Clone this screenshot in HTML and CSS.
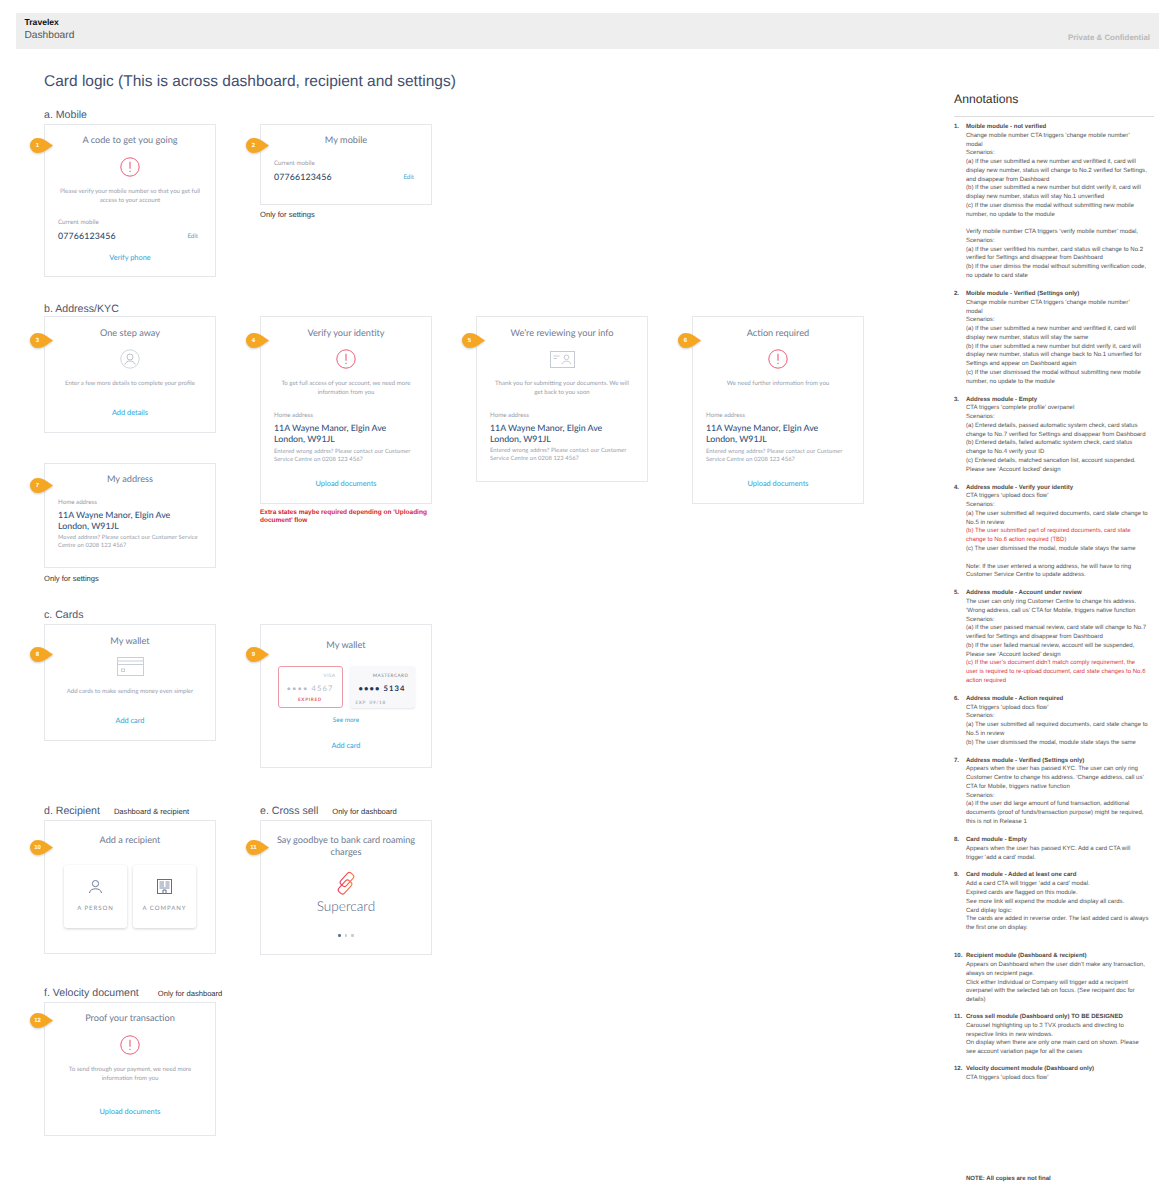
FILE: index.html
```html
<!DOCTYPE html>
<html lang="en">
<head>
<meta charset="utf-8">
<title>Travelex Dashboard - Card logic</title>
<link rel="stylesheet" href="styles.css">
</head>
<body>
<svg class="defs" width="0" height="0" aria-hidden="true">
  <symbol id="pin" viewBox="0 0 23 15"><path d="M7.5 0C13 0 17 3.5 23 7.5C17 11.5 13 15 7.5 15A7.5 7.5 0 0 1 7.5 0Z"/></symbol>
  <symbol id="alert" viewBox="0 0 20 20"><circle cx="10" cy="10" r="9.2" fill="none" stroke="#ee5a75" stroke-width="1"/><path d="M10 4.8V11.8" stroke="#ee5a75" stroke-width="1.1" fill="none"/><circle cx="10" cy="14.4" r=".7" fill="#ee5a75"/></symbol>
  <linearGradient id="sc" x1="0" y1="1" x2="1" y2="0"><stop offset="0" stop-color="#f0355f"/><stop offset="1" stop-color="#f77b3c"/></linearGradient>
</svg>
<header class="top">
  <div>
    <div class="brand">Travelex</div>
    <div class="crumb">Dashboard</div>
  </div>
  <div class="conf">Private &amp; Confidential</div>
</header>
<div class="page">
  <main class="main">
    <h1 class="title">Card logic (This is across dashboard, recipient and settings)</h1>

    <h2 class="sec sec-a">a. Mobile</h2>
    <div class="row">
      <div class="col">
        <article class="card card-1">
          <div class="badge b14"><svg><use href="#pin"/></svg><span>1</span></div>
          <h3 class="ct">A code to get you going</h3>
          <svg class="ic-alert"><use href="#alert"/></svg>
          <p class="desc">Please verify your mobile number so that you get full<br>access to your account</p>
          <div class="lab lab-1">Current mobile</div>
          <div class="phone"><span class="num">07766123456</span><a class="edit">Edit</a></div>
          <a class="link link-1">Verify phone</a>
        </article>
      </div>
      <div class="col">
        <article class="card card-2">
          <div class="badge b14"><svg><use href="#pin"/></svg><span>2</span></div>
          <h3 class="ct">My mobile</h3>
          <div class="lab lab-2">Current mobile</div>
          <div class="phone"><span class="num">07766123456</span><a class="edit">Edit</a></div>
        </article>
        <p class="only">Only for settings</p>
      </div>
    </div>

    <h2 class="sec sec-b">b. Address/KYC</h2>
    <div class="row">
      <div class="col">
        <article class="card card-3">
          <div class="badge b17"><svg><use href="#pin"/></svg><span>3</span></div>
          <h3 class="ct ct-b">One step away</h3>
          <svg class="ic-alert" viewBox="0 0 20 20"><circle cx="10" cy="10" r="9.2" fill="none" stroke="#cfd3dc"/><circle cx="10" cy="8" r="3" fill="none" stroke="#bcc2ce"/><path d="M4.8 15.6C5.8 12.8 7.8 12 10 12S14.2 12.8 15.2 15.6" fill="none" stroke="#bcc2ce"/></svg>
          <p class="desc">Enter a few more details to complete your profile</p>
          <a class="link link-3">Add details</a>
        </article>
        <article class="card card-7">
          <div class="badge b15"><svg><use href="#pin"/></svg><span>7</span></div>
          <h3 class="ct">My address</h3>
          <div class="lab lab-7">Home address</div>
          <div class="addr">11A Wayne Manor, Elgin Ave<br>London, W91JL</div>
          <p class="small">Moved address? Please contact our Customer Service<br>Centre on 0208 123 4567</p>
        </article>
        <p class="only only-7">Only for settings</p>
      </div>
      <div class="col">
        <article class="card card-4">
          <div class="badge b17"><svg><use href="#pin"/></svg><span>4</span></div>
          <h3 class="ct ct-b">Verify your identity</h3>
          <svg class="ic-alert"><use href="#alert"/></svg>
          <p class="desc">To get full access of your account, we need more<br>information from you</p>
          <div class="lab lab-4">Home address</div>
          <div class="addr">11A Wayne Manor, Elgin Ave<br>London, W91JL</div>
          <p class="small">Entered wrong addrss? Please contact our Customer<br>Service Centre on 0208 123 4567</p>
          <a class="link link-4">Upload documents</a>
        </article>
        <p class="warn">Extra states maybe required depending on ‘Uploading<br>document’ flow</p>
      </div>
      <div class="col">
        <article class="card card-5">
          <div class="badge b17"><svg><use href="#pin"/></svg><span>5</span></div>
          <h3 class="ct ct-b">We’re reviewing your info</h3>
          <svg class="ic-id" viewBox="0 0 25 17"><rect x=".5" y=".5" width="24" height="16" fill="none" stroke="#c5cad5"/><path d="M3.5 5H9.5M3.5 7.5H7" stroke="#c5cad5" fill="none"/><circle cx="16.5" cy="6.3" r="2.3" fill="none" stroke="#c5cad5"/><path d="M12 13.2C12.8 10.8 14.8 10.2 16.5 10.2S20.2 10.8 21 13.2" fill="none" stroke="#c5cad5"/></svg>
          <p class="desc desc-id">Thank you for submitting your documents. We will<br>get back to you soon</p>
          <div class="lab lab-4">Home address</div>
          <div class="addr">11A Wayne Manor, Elgin Ave<br>London, W91JL</div>
          <p class="small">Entered wrong addrss? Please contact our Customer<br>Service Centre on 0208 123 4567</p>
        </article>
      </div>
      <div class="col">
        <article class="card card-4">
          <div class="badge b17"><svg><use href="#pin"/></svg><span>6</span></div>
          <h3 class="ct ct-b">Action required</h3>
          <svg class="ic-alert"><use href="#alert"/></svg>
          <p class="desc desc-one">We need further information from you</p>
          <div class="lab lab-4">Home address</div>
          <div class="addr">11A Wayne Manor, Elgin Ave<br>London, W91JL</div>
          <p class="small">Entered wrong addrss? Please contact our Customer<br>Service Centre on 0208 123 4567</p>
          <a class="link link-4">Upload documents</a>
        </article>
      </div>
    </div>

    <h2 class="sec sec-c">c. Cards</h2>
    <div class="row">
      <div class="col">
        <article class="card card-8">
          <div class="badge b23"><svg><use href="#pin"/></svg><span>8</span></div>
          <h3 class="ct ct-b">My wallet</h3>
          <svg class="ic-card" viewBox="0 0 27 19"><rect x=".5" y=".5" width="26" height="18" fill="none" stroke="#c9ced8"/><path d="M.5 4H26.5M.5 7.5H26.5" stroke="#c9ced8" fill="none"/><rect x="4.5" y="12" width="3" height="2.5" fill="none" stroke="#c9ced8"/></svg>
          <p class="desc desc-8">Add cards to make sending money even simpler</p>
          <a class="link link-8">Add card</a>
        </article>
      </div>
      <div class="col">
        <article class="card card-9">
          <div class="badge b23"><svg><use href="#pin"/></svg><span>9</span></div>
          <h3 class="ct ct-9">My wallet</h3>
          <div class="minis">
            <div class="mini mini-exp">
              <div class="scheme">VISA</div>
              <div class="pan">•••• 4567</div>
              <div class="expired">EXPIRED</div>
            </div>
            <div class="mini mini-ok">
              <div class="scheme">MASTERCARD</div>
              <div class="pan">•••• 5134</div>
              <div class="exp">EXP &nbsp;09/18</div>
            </div>
          </div>
          <a class="link see">See more</a>
          <a class="link add">Add card</a>
        </article>
      </div>
    </div>

    <div class="row row-d">
      <div class="col">
        <h2 class="sec sec-n">d. Recipient <span class="aside-n">Dashboard &amp; recipient</span></h2>
        <article class="card card-10">
          <div class="badge b20"><svg><use href="#pin"/></svg><span>10</span></div>
          <h3 class="ct ct-low">Add a recipient</h3>
          <div class="tiles">
            <div class="tile">
              <svg class="ic-p" viewBox="0 0 13 13"><circle cx="6.5" cy="3.6" r="3.1" fill="none" stroke="#5f6f8d" stroke-width=".9"/><path d="M.4 13C1 10 3.4 8.8 6.5 8.8S12 10 12.6 13" fill="none" stroke="#5f6f8d" stroke-width=".9"/></svg>
              <span>A PERSON</span>
            </div>
            <div class="tile">
              <svg class="ic-c" viewBox="0 0 15 15"><rect x=".5" y=".5" width="14" height="14" fill="none" stroke="#5f6f8d"/><path d="M2.5 3H7M8.5 3H12.5M2.5 5H7M8.5 5H12.5M2.5 7H7M8.5 7H12.5M2.5 9H12.5" stroke="#5f6f8d" stroke-width=".8" fill="none"/><path d="M6 14.5V11H9V14.5" fill="none" stroke="#5f6f8d"/></svg>
              <span>A COMPANY</span>
            </div>
          </div>
        </article>
      </div>
      <div class="col">
        <h2 class="sec sec-n">e. Cross sell <span class="aside-n">Only for dashboard</span></h2>
        <article class="card card-11">
          <div class="badge b20"><svg><use href="#pin"/></svg><span>11</span></div>
          <h3 class="ct ct-low">Say goodbye to bank card roaming<br>charges</h3>
          <svg class="ic-sc" viewBox="0 0 18 25"><g fill="none" stroke="url(#sc)" stroke-width="1.1"><rect x="6.2" y="1" width="7.5" height="15" rx="2.6" transform="rotate(42 10 8.5)"/><rect x="4.3" y="8.5" width="7.5" height="15" rx="2.6" transform="rotate(42 8 16)"/></g></svg>
          <div class="super">Supercard</div>
          <div class="dots"><i class="on"></i><i></i><i></i></div>
        </article>
      </div>
    </div>

    <h2 class="sec sec-f">f. Velocity document <span class="aside-n aside-f">Only for dashboard</span></h2>
    <div class="row">
      <div class="col">
        <article class="card card-12">
          <div class="badge b11"><svg><use href="#pin"/></svg><span>12</span></div>
          <h3 class="ct">Proof your transaction</h3>
          <svg class="ic-alert"><use href="#alert"/></svg>
          <p class="desc">To send through your payment, we need more<br>information from you</p>
          <a class="link link-12">Upload documents</a>
        </article>
      </div>
    </div>
  </main>

  <aside class="notes">
    <h2 class="notes-title">Annotations</h2>
    <ol class="list">
      <li><span class="n">1.</span><div><b>Moible module - not verified</b><br>Change mobile number CTA triggers ‘change mobile number’<br>modal<br>Scenarios:<br>(a) If the user submitted a new number and verifitied it, card will<br>display new number, status will change to No.2 verified for Settings,<br>and disappear from Dashboard<br>(b) If the user submitted a new number but didnt verify it, card will<br>display new number, status will stay No.1 unverified<br>(c) If the user dismiss the modal without submitting new mobile<br>number, no update to the module<br><br>Verify mobile number CTA triggers ‘verify mobile number’ modal,<br>Scenarios:<br>(a) If the user verifitied his number, card status will change to No.2<br>verified for Settings and disappear from Dashboard<br>(b) If the user dimiss the modal without submitting verification code,<br>no update to card state</div></li>
      <li><span class="n">2.</span><div><b>Moible module - Verified (Settings only)</b><br>Change mobile number CTA triggers ‘change mobile number’<br>modal<br>Scenarios:<br>(a) If the user submitted a new number and verifitied it, card will<br>display new number, status will stay the same<br>(b) If the user submitted a new number but didnt verify it, card will<br>display new number, status will change back to No.1 unverfied for<br>Settings and appear on Dashboard again<br>(c) If the user dismissed the modal without submitting new mobile<br>number, no update to the module</div></li>
      <li><span class="n">3.</span><div><b>Address module - Empty</b><br>CTA triggers ‘complete profile’ overpanel<br>Scenarios:<br>(a) Entered details, passed automatic system check, card status<br>change to No.7 verified for Settings and disappear from Dashboard<br>(b) Entered details, failed automatic system check, card status<br>change to No.4 verify your ID<br>(c) Entered details, matched sancation list, account suspended.<br>Please see ‘Account locked’ design</div></li>
      <li><span class="n">4.</span><div><b>Address module - Verify your identity</b><br>CTA triggers ‘upload docs flow’<br>Scenarios:<br>(a) The user submitted all required documents, card state change to<br>No.5 in review<br><span class="red">(b) The user submitted part of required documents, card state<br>change to No.6 action required (TBD)</span><br>(c) The user dismissed the modal, module state stays the same<br><br>Note: If the user entered a wrong address, he will have to ring<br>Customer Service Centre to update address.</div></li>
      <li><span class="n">5.</span><div><b>Address module - Account under review</b><br>The user can only ring Customer Centre to change his address.<br>‘Wrong address, call us’ CTA for Mobile, triggers native function<br>Scenarios:<br>(a) If the user passed manual review, card state will change to No.7<br>verified for Settings and disappear from Dashboard<br>(b) If the user failed manual review, account will be suspended,<br>Please see ‘Account locked’ design<br><span class="red">(c) If the user’s document didn’t match comply requirement, the<br>user is required to re-upload document, card state changes to No.6<br>action required</span></div></li>
      <li><span class="n">6.</span><div><b>Address module - Action required</b><br>CTA triggers ‘upload docs flow’<br>Scenarios:<br>(a) The user submitted all required documents, card state change to<br>No.5 in review<br>(b) The user dismissed the modal, module state stays the same</div></li>
      <li><span class="n">7.</span><div><b>Address module - Verified (Settings only)</b><br>Appears when the user has passed KYC. The user can only ring<br>Customer Centre to change his address. ‘Change address, call us’<br>CTA for Mobile, triggers native function<br>Scenarios:<br>(a) If the user did large amount of fund transaction, additional<br>documents (proof of funds/transaction purpose) might be required,<br>this is not in Release 1</div></li>
      <li><span class="n">8.</span><div><b>Card module - Empty</b><br>Appears when the user has passed KYC. Add a card CTA will<br>trigger ‘add a card’ modal.</div></li>
      <li class="gap-extra"><span class="n">9.</span><div><b>Card module - Added at least one card</b><br>Add a card CTA will trigger ‘add a card’ modal.<br>Expired cards are flagged on this module.<br>See more link will expend the module and display all cards.<br>Card diplay logic:<br>The cards are added in reverse order. The last added card is always<br>the first one on display.</div></li>
      <li class="gap-tight"><span class="n">10.</span><div><b>Recipient module (Dashboard &amp; recipient)</b><br>Appears on Dashboard when the user didn’t make any transaction,<br>always on recipient page.<br>Click either Individual or Company will trigger add a recipeint<br>overpanel with the selected tab on focus. (See recipaint doc for<br>details)</div></li>
      <li class="gap-tight"><span class="n">11.</span><div><b>Cross sell module (Dashboard only) TO BE DESIGNED</b><br>Carousel highlighting up to 3 TVX products and directing to<br>respective links in new windows.<br>On display when there are only one main card on shown. Please<br>see account variation page for all the cases</div></li>
      <li><span class="n">12.</span><div><b>Velocity document module (Dashboard only)</b><br>CTA triggers ‘upload docs flow’</div></li>
    </ol>
    <p class="final">NOTE: All copies are not final</p>
  </aside>
</div>
</body>
</html>
```

FILE: styles.css
```css
* { box-sizing: border-box; }
html, body { margin: 0; padding: 0; }
body { background: #fff; font-family: "Liberation Sans", Arial, sans-serif; color: #333; width: 1175px; height: 1199px; overflow: hidden; text-rendering: geometricPrecision; }
h1, h2, h3, p, ol { margin: 0; padding: 0; font-weight: 400; }
.defs { position: absolute; }

.top { margin: 13px 16px 0; height: 36px; background: #eee; padding: 4px 9px 0 8.5px; display: flex; justify-content: space-between; }
.brand { font-size: 8.6px; font-weight: 700; line-height: 10px; color: #111; }
.crumb { font-size: 10.2px; line-height: 14px; color: #555; margin-top: 2px; }
.conf { font-size: 7.9px; font-weight: 700; color: #b9b9b9; line-height: 10px; margin-top: 16px; }

.page { display: flex; }
.main { width: 954px; flex: none; padding-left: 44px; }
.title { font-size: 15.5px; line-height: 20px; color: #444f70; margin-top: 23px; }

.sec { font-size: 10.6px; line-height: 14px; color: #4d5670; margin-bottom: 2px; white-space: nowrap; }
.sec-a { margin-top: 16px; }
.sec-b { margin-top: 25px; margin-bottom: 0; }
.sec-c { margin-top: 24px; }
.sec-f { margin-top: 31px; }
.aside-n { font-size: 7.6px; line-height: 1; color: #333; margin-left: 11px; }
.aside-f { margin-left: 16px; }

.row { display: flex; gap: 44px; align-items: flex-start; }
.row-d { margin-top: 36px; }
.col { width: 172px; flex: none; }

.card { position: relative; display: flex; flex-direction: column; align-items: center; width: 172px; padding: 9px 0 0; border: 1px solid #e5e7eb; background: #fff; font-family: Lato, sans-serif; }
.badge { position: absolute; left: -15px; width: 23px; height: 15px; display: flex; align-items: center; justify-content: center; padding-right: 8px; }
.badge svg { position: absolute; left: 0; top: 0; width: 23px; height: 15px; fill: #f5a623; filter: drop-shadow(0 1px 1px rgba(90, 90, 90, .3)); }
.badge span { position: relative; font: 700 6px/1 "Liberation Sans", Arial, sans-serif; color: #fff; }
.b11 { top: 10px; }
.b14 { top: 13px; }
.b15 { top: 14px; }
.b17 { top: 16px; }
.b20 { top: 19px; }
.b23 { top: 22px; }

.ct { font-size: 9.2px; line-height: 12px; color: #6f7a92; text-align: center; white-space: nowrap; }
.ct-b { margin-top: 1px; margin-bottom: -1px; }
.ct-low { margin-top: 4px; }
.ic-alert { display: block; width: 20px; height: 20px; margin-top: 11px; }
.desc { font-size: 6.1px; line-height: 9px; color: #979eae; text-align: center; margin-top: 9.5px; white-space: nowrap; }
.lab { align-self: flex-start; margin-left: 13px; font-size: 6.2px; line-height: 9px; color: #949bac; }
.lab-1 { margin-top: 13.5px; }
.lab-2 { margin-top: 13px; }
.lab-4 { margin-top: 14.5px; }
.lab-7 { margin-top: 12.5px; }
.phone { align-self: stretch; display: flex; justify-content: space-between; align-items: center; margin: 2.5px 17px 0 13px; height: 12px; }
.num { font-size: 8.8px; font-weight: 500; color: #2f4a6b; letter-spacing: .15px; }
.edit { font-size: 6.2px; color: #35a8da; margin-top: 2px; }
.link { display: block; font-size: 7.4px; line-height: 10px; color: #2aa6db; }
.link-1 { margin-top: 11px; }
.link-3 { margin-top: 20px; }
.link-8 { margin-top: 19.5px; }
.link-4 { margin-top: 15px; }
.link-12 { margin-top: 24px; }

.card-1 { height: 153px; }
.card-2 { height: 81px; }
.card-3 { height: 117px; }
.card-4 { height: 188px; }
.card-5 { height: 166px; }
.card-7 { height: 105px; margin-top: 30px; }
.card-8 { height: 117px; }
.card-9 { height: 144px; }
.card-10 { height: 134px; }
.card-11 { height: 135px; }
.card-12 { height: 134px; }

.addr { align-self: flex-start; margin: 2px 0 0 13px; font-size: 8.8px; line-height: 11px; font-weight: 500; color: #34537c; white-space: nowrap; }
.small { align-self: flex-start; margin: 3.5px 0 0 13px; font-size: 5.8px; line-height: 8px; letter-spacing: .08px; color: #979eae; white-space: nowrap; }

.only { font-size: 7.6px; line-height: 10px; color: #333; margin-top: 5px; }
.only-7 { margin-top: 6px; }
.warn { font-size: 6.5px; font-weight: 700; line-height: 8px; color: #d8232f; margin-top: 5px; white-space: nowrap; }

.ic-id { display: block; width: 25px; height: 17px; margin-top: 13px; }
.desc-id { margin-top: 11px; margin-bottom: -1px; }
.desc-one { margin-bottom: 9px; }
.ic-card { display: block; width: 27px; height: 19px; margin-top: 11px; }
.desc-8 { margin-top: 11px; }

.ct-9 { margin-top: 5px; margin-bottom: -1px; }
.minis { display: flex; gap: 7px; margin-top: 16px; }
.mini { width: 65px; height: 42px; border-radius: 3px; padding: 6px 6px 0; font-family: Lato, sans-serif; }
.mini-exp { border: 1px solid #ee9aa6; padding-top: 5px; }
.mini-ok { background: #f8f8fa; box-shadow: 0 1px 2px rgba(0, 0, 0, .1); }
.scheme { font-size: 4.6px; line-height: 7px; letter-spacing: .5px; color: #aeb3c0; text-align: right; }
.mini-ok .scheme { color: #777f91; }
.pan { font-size: 7.6px; line-height: 10px; letter-spacing: 1.1px; color: #b6bbc7; text-align: center; margin-top: 4px; }
.mini-ok .pan { color: #22375a; font-weight: 700; }
.expired { font-size: 4.6px; font-weight: 700; line-height: 7px; letter-spacing: .7px; color: #e65a6c; text-align: center; margin-top: 3px; }
.exp { font-size: 4.6px; line-height: 7px; letter-spacing: .7px; color: #8b92a3; margin-top: 6px; }
.see { font-size: 6.4px; margin-top: 8px; }
.add { margin-top: 15px; }

.tiles { display: flex; gap: 6px; margin-top: 19px; }
.tile { width: 63px; height: 63px; border-radius: 3px; background: #fff; box-shadow: 0 1px 3px rgba(0, 0, 0, .18); display: flex; flex-direction: column; align-items: center; }
.tile span { font-size: 6px; line-height: 8px; letter-spacing: .95px; color: #8790a4; margin-top: 12px; }
.ic-p { display: block; width: 13px; height: 13px; margin-top: 15px; }
.ic-c { display: block; width: 15px; height: 15px; margin-top: 14px; margin-bottom: -1px; }

.ic-sc { display: block; width: 18px; height: 25px; margin-top: 13px; }
.super { font-size: 13.6px; font-weight: 300; line-height: 18px; color: #536384; margin-top: 1px; }
.dots { display: flex; gap: 4px; margin-top: 19px; }
.dots i { display: block; width: 2.5px; height: 2.5px; border-radius: 50%; background: #c6cbd5; }
.dots i.on { background: #64728f; }

.notes { width: 200px; flex: none; }
.notes-title { font-size: 12.2px; line-height: 14px; color: #333; margin-top: 42.5px; padding-bottom: 10.5px; border-bottom: 1px solid #ddd; }
.list { list-style: none; margin-top: 6px; font-size: 6.05px; line-height: 8.77px; color: #555; white-space: nowrap; }
.list li { display: flex; margin-bottom: 9.2px; }
.list li.gap-extra { margin-bottom: 19.5px; }
.list li.gap-tight { margin-bottom: 8.2px; }
.list .n { width: 12px; flex: none; font-weight: 700; color: #4a4a4a; }
.list b { color: #4a4a4a; }
.red { color: #dd3b44; }
.final { margin: 92px 0 0 12px; font-size: 6.05px; line-height: 8.77px; font-weight: 700; color: #4a4a4a; }
```
